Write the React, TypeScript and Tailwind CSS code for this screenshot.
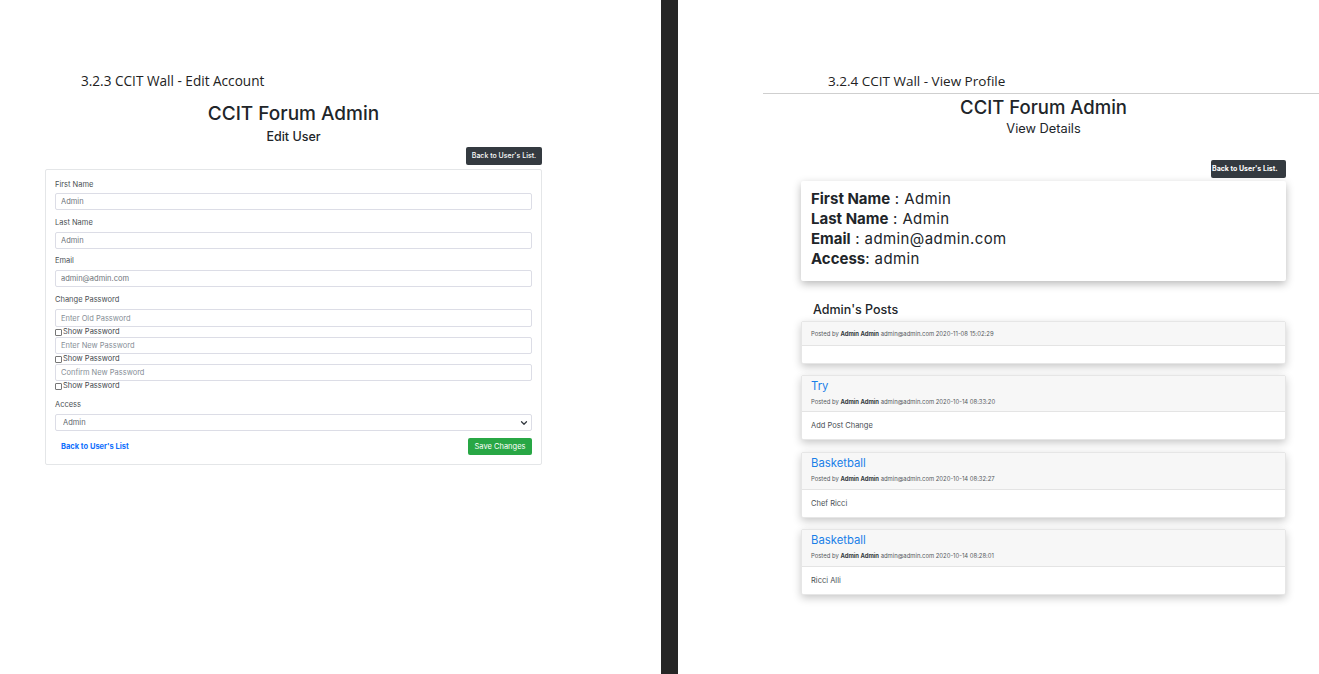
import React from "react";
import { ChevronDown } from "lucide-react";

const Label: React.FC<{ className?: string; children: React.ReactNode }> = ({ className, children }) => (
  <div className={`h-[12px] text-[7.5px] leading-[12px] text-[#4a4f54] ${className ?? ""}`}>{children}</div>
);

const Field: React.FC<{ value?: string; placeholder?: string; className?: string }> = ({ value, placeholder, className }) => (
  <input
    readOnly
    value={value}
    placeholder={placeholder}
    className={`block h-[17px] w-full rounded-[2px] border border-[#dcdde6] bg-white px-[5px] text-[7.5px] text-[#6d7379] outline-none placeholder:text-[#868e96] ${className ?? ""}`}
  />
);

const ShowPassword: React.FC = () => (
  <label className="flex h-[10px] items-center gap-[1px] text-[7.5px] leading-[10px] text-[#44484d]">
    <input type="checkbox" className="h-[7px] w-[7px] appearance-none rounded-[1px] border border-[#777] bg-white" />
    Show Password
  </label>
);

const BackButton: React.FC<{ className?: string }> = ({ className }) => (
  <button className={`flex h-[18px] items-center rounded-[2px] bg-[#343a40] text-[7px] whitespace-nowrap text-white ${className ?? ""}`}>
    Back to User's List.
  </button>
);

const EditUser: React.FC = () => (
  <div className="h-[674px] w-[661px] flex-none bg-white pt-[73px]">
    <div className="h-[16px] pl-[81px] text-[13.6px] leading-[16px] text-[#222] [font-family:'Open_Sans',sans-serif]">
      3.2.3 CCIT Wall - Edit Account
    </div>
    <div className="ml-[45px] w-[497px]">
      <h1 className="mt-[13px] h-[24px] text-center text-[19px] leading-[24px] font-medium text-[#212529]">CCIT Forum Admin</h1>
      <h2 className="mt-[3px] h-[16px] text-center text-[12.5px] leading-[16px] font-medium text-[#212529]">Edit User</h2>
      <div className="mt-[2px] flex justify-end">
        <BackButton className="w-[76px] justify-center font-medium" />
      </div>
      <form className="mt-[4px] h-[296px] rounded-[2px] border border-[#e4e6e8] bg-white px-[9px] pt-[9px]">
        <Label>First Name</Label>
        <Field value="Admin" className="mt-[2px]" />
        <Label className="mt-[7px]">Last Name</Label>
        <Field value="Admin" className="mt-[3px]" />
        <Label className="mt-[6px]">Email</Label>
        <Field value="admin@admin.com" className="mt-[3px]" />
        <Label className="mt-[7px]">Change Password</Label>
        <Field placeholder="Enter Old Password" className="mt-[3px] h-[18px]" />
        <ShowPassword />
        <Field placeholder="Enter New Password" />
        <ShowPassword />
        <Field placeholder="Confirm New Password" />
        <ShowPassword />
        <Label className="mt-[8px]">Access</Label>
        <div className="relative mt-[3px]">
          <select className="block h-[17px] w-full appearance-none rounded-[2px] border border-[#dcdde6] bg-white px-[7px] text-[7.5px] text-[#60666c] outline-none">
            <option>Admin</option>
          </select>
          <ChevronDown className="absolute top-[4px] right-[3px] h-[10px] w-[10px] text-[#343a40]" strokeWidth={3} />
        </div>
        <div className="mt-[7px] flex items-center justify-between pl-[6px]">
          <a className="text-[7.5px] font-bold text-[#0d6efd]">Back to User's List</a>
          <button type="button" className="h-[17px] w-[64px] rounded-[2px] bg-[#28a745] text-[7.5px] whitespace-nowrap text-white">
            Save Changes
          </button>
        </div>
      </form>
    </div>
  </div>
);

const InfoRow: React.FC<{ name: string; sep: string; value: string }> = ({ name, sep, value }) => (
  <div className="h-[20px] text-[15px] leading-[20px] tracking-[0.4px] text-[#212529]">
    <b className="font-bold tracking-normal">{name}</b>
    {sep}
    {value}
  </div>
);

const PostCard: React.FC<{ title?: string; date: string; body?: string; headClass: string; bodyClass: string; mt: string }> = ({
  title,
  date,
  body,
  headClass,
  bodyClass,
  mt,
}) => (
  <div className={`${mt} overflow-hidden rounded-[2px] border border-[#e6e6e6] bg-white shadow-[0_3px_8px_rgba(0,0,0,0.22)]`}>
    <div className={`${headClass} border-b border-[#e4e4e4] bg-[#f7f7f7] px-[9px]`}>
      {title && <div className="pt-[2px] text-[11.3px] leading-[16px] text-[#1a7fe8]">{title}</div>}
      <div className={`text-[5.9px] leading-[8px] whitespace-nowrap text-[#55595d] ${title ? "mt-[4px]" : "pt-[8px]"}`}>
        Posted by <b className="font-bold text-[#343a40]">Admin Admin</b> admin@admin.com {date}
      </div>
    </div>
    <div className={`${bodyClass} px-[9px] pt-[9px] text-[7.5px] leading-[10px] text-[#4a4f54]`}>{body}</div>
  </div>
);

const ViewProfile: React.FC = () => (
  <div className="h-[674px] min-w-0 flex-1 bg-white pt-[73px]">
    <div className="ml-[85px] h-[21px] border-b border-[#cfcfcf] pl-[65px] text-[13.5px] leading-[16px] text-[#222] [font-family:'Open_Sans',sans-serif]">
      3.2.4 CCIT Wall - View Profile
    </div>
    <div className="ml-[123px] w-[485px]">
      <h1 className="mt-[1px] h-[24px] text-center text-[18.5px] leading-[24px] font-medium text-[#212529]">CCIT Forum Admin</h1>
      <h2 className="mt-[2px] h-[16px] text-center text-[12.8px] leading-[16px] text-[#212529]">View Details</h2>
      <div className="mt-[23px] flex justify-end">
        <BackButton className="w-[75px] pl-[1px] font-bold" />
      </div>
      <div className="mt-[3px] h-[100px] rounded-[2px] bg-white px-[10px] pt-[8px] shadow-[0_3px_8px_rgba(0,0,0,0.28)]">
        <InfoRow name="First Name" sep=" : " value="Admin" />
        <InfoRow name="Last Name" sep=" : " value="Admin" />
        <InfoRow name="Email" sep=" : " value="admin@admin.com" />
        <InfoRow name="Access" sep=": " value="admin" />
      </div>
      <h3 className="mt-[21px] h-[16px] pl-[12px] text-[12.5px] leading-[16px] font-medium text-[#212529]">Admin's Posts</h3>
      <PostCard mt="mt-[3px]" date="2020-11-08 15:02:29" headClass="h-[24px]" bodyClass="h-[17px]" />
      <PostCard mt="mt-[11px]" title="Try" date="2020-10-14 08:33:20" body="Add Post Change" headClass="h-[36px]" bodyClass="h-[27px]" />
      <PostCard mt="mt-[12px]" title="Basketball" date="2020-10-14 08:32:27" body="Chef Ricci" headClass="h-[37px]" bodyClass="h-[27px]" />
      <PostCard mt="mt-[11px]" title="Basketball" date="2020-10-14 08:28:01" body="Ricci Alli" headClass="h-[37px]" bodyClass="h-[27px]" />
    </div>
  </div>
);

export default function App() {
  return (
    <div className="flex h-[674px] w-[1319px] overflow-hidden bg-white [font-family:Inter,sans-serif]">
      <EditUser />
      <div className="w-[17px] flex-none bg-[#262626]" />
      <ViewProfile />
    </div>
  );
}
